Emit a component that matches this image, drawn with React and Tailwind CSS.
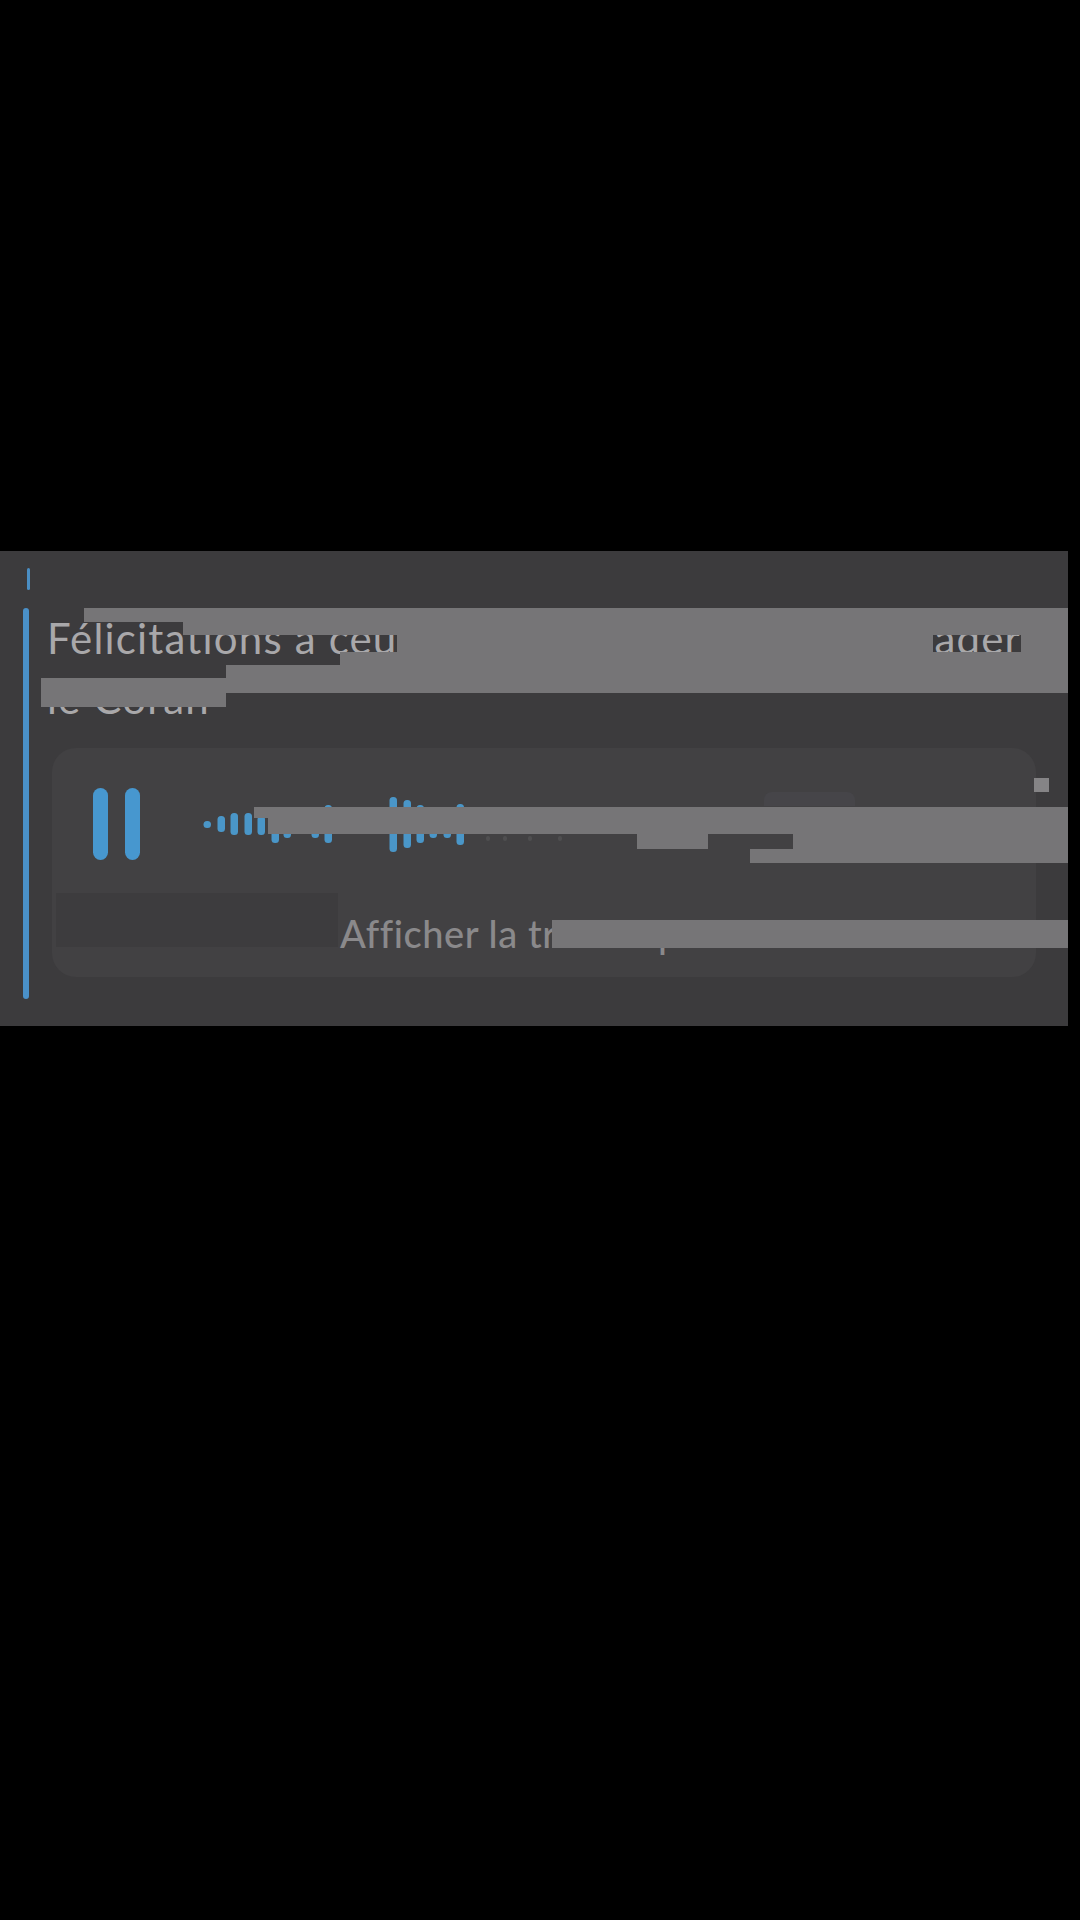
const WAVE = [
  [207, 821, 828],
  [221, 816, 832],
  [234, 813, 835],
  [248, 813, 835],
  [261, 816, 835],
  [275, 818, 843],
  [287, 820, 838],
  [315, 820, 838],
  [328, 805, 843],
  [393, 797, 852],
  [407, 800, 848],
  [420, 805, 843],
  [433, 812, 838],
  [447, 812, 838],
  [460, 804, 845],
];

const FAINT = [488, 505, 530, 560];

function Waveform() {
  return (
    <svg width="400" height="72" viewBox="200 788 400 72" className="ml-[60px] shrink-0">
      {WAVE.map(([x, y1, y2]) => (
        <rect key={x} x={x - 3.5} y={y1} width="7.5" height={y2 - y1} rx="3.5" fill="#4a96c8" />
      ))}
      {FAINT.map((x) => (
        <rect key={x} x={x - 2} y="836" width="4" height="5" rx="2" fill="#4f4e50" />
      ))}
    </svg>
  );
}

export default function App() {
  return (
    <div className="w-[1080px] h-[1920px] bg-black pt-[551px] font-['Lato',sans-serif]">
      <div className="relative w-[1068px] h-[475px] bg-[#3c3b3d] pt-[17px]">
        <div className="ml-[27px] w-[3px] h-[22px] rounded-full bg-[#4a8ec4]" />

        <div className="mt-[18px] flex">
          <div className="ml-[23px] w-[6px] h-[391px] rounded-full bg-[#4a90c8] shrink-0" />

          <div className="ml-[18px] flex-1">
            <div className="flex justify-between pr-[47px] text-[42px] tracking-[0.028em] leading-[60px] text-[#a9a8aa]">
              <span>Félicitations à ceux</span>
              <span>ader</span>
            </div>
            <div className="text-[42px] tracking-[0.028em] leading-[60px] text-[#a9a8aa]">le Coran</div>

            <div className="relative mt-[20px] ml-[5px] w-[984px] h-[229px] rounded-[24px] bg-[#424143] flex flex-col">
              <div className="h-[145px] pt-[40px] pl-[41px] flex items-start">
                <div className="flex gap-[17px]">
                  <div className="w-[15px] h-[72px] rounded-full bg-[#4797cf]" />
                  <div className="w-[15px] h-[72px] rounded-full bg-[#4797cf]" />
                </div>
                <Waveform />
              </div>
              <div className="relative h-[84px] flex items-center justify-center">
                <div className="absolute left-[4px] top-0 w-[282px] h-[54px] bg-[#3d3c3e]" />
                <span className="relative -mt-1 text-[38px] tracking-[0.015em] leading-[50px] font-medium text-[#8a898b]">
                  Afficher la transcription
                </span>
              </div>
              <div className="absolute left-[712px] top-[44px] w-[91px] h-[14px] rounded-t-[8px] bg-[#464549]" />
            </div>
          </div>
        </div>

        {/* bandes grises par dessus le contenu */}
        <div className="absolute inset-x-0 top-[57px] flex flex-col">
          <div className="ml-[84px] h-[14px] bg-[#767577]" />
          <div className="ml-[183px] h-[13px] bg-[#767577]" />
          <div className="ml-[397px] h-[17px] flex gap-[88px]">
            <div className="w-[536px] bg-[#767577]" />
            <div className="flex-1 bg-[#767577]" />
          </div>
          <div className="ml-[340px] h-[13px] bg-[#767577]" />
          <div className="ml-[226px] h-[13px] bg-[#767577]" />
          <div className="ml-[41px] h-[15px] bg-[#767577]" />
          <div className="ml-[41px] w-[185px] h-[14px] bg-[#767577]" />
        </div>

        <div className="absolute inset-x-0 top-[256px] flex flex-col">
          <div className="ml-[254px] h-[11px] bg-[#767577]" />
          <div className="ml-[268px] h-[16px] bg-[#767577]" />
          <div className="ml-[637px] h-[15px] flex gap-[85px]">
            <div className="w-[71px] bg-[#767577]" />
            <div className="flex-1 bg-[#767577]" />
          </div>
          <div className="ml-[750px] h-[14px] bg-[#767577]" />
        </div>

        <div className="absolute left-[552px] right-0 top-[369px] h-[28px] bg-[#767577]" />
        <div className="absolute left-[1034px] top-[227px] w-[15px] h-[14px] bg-[#858486]" />
      </div>
    </div>
  );
}
